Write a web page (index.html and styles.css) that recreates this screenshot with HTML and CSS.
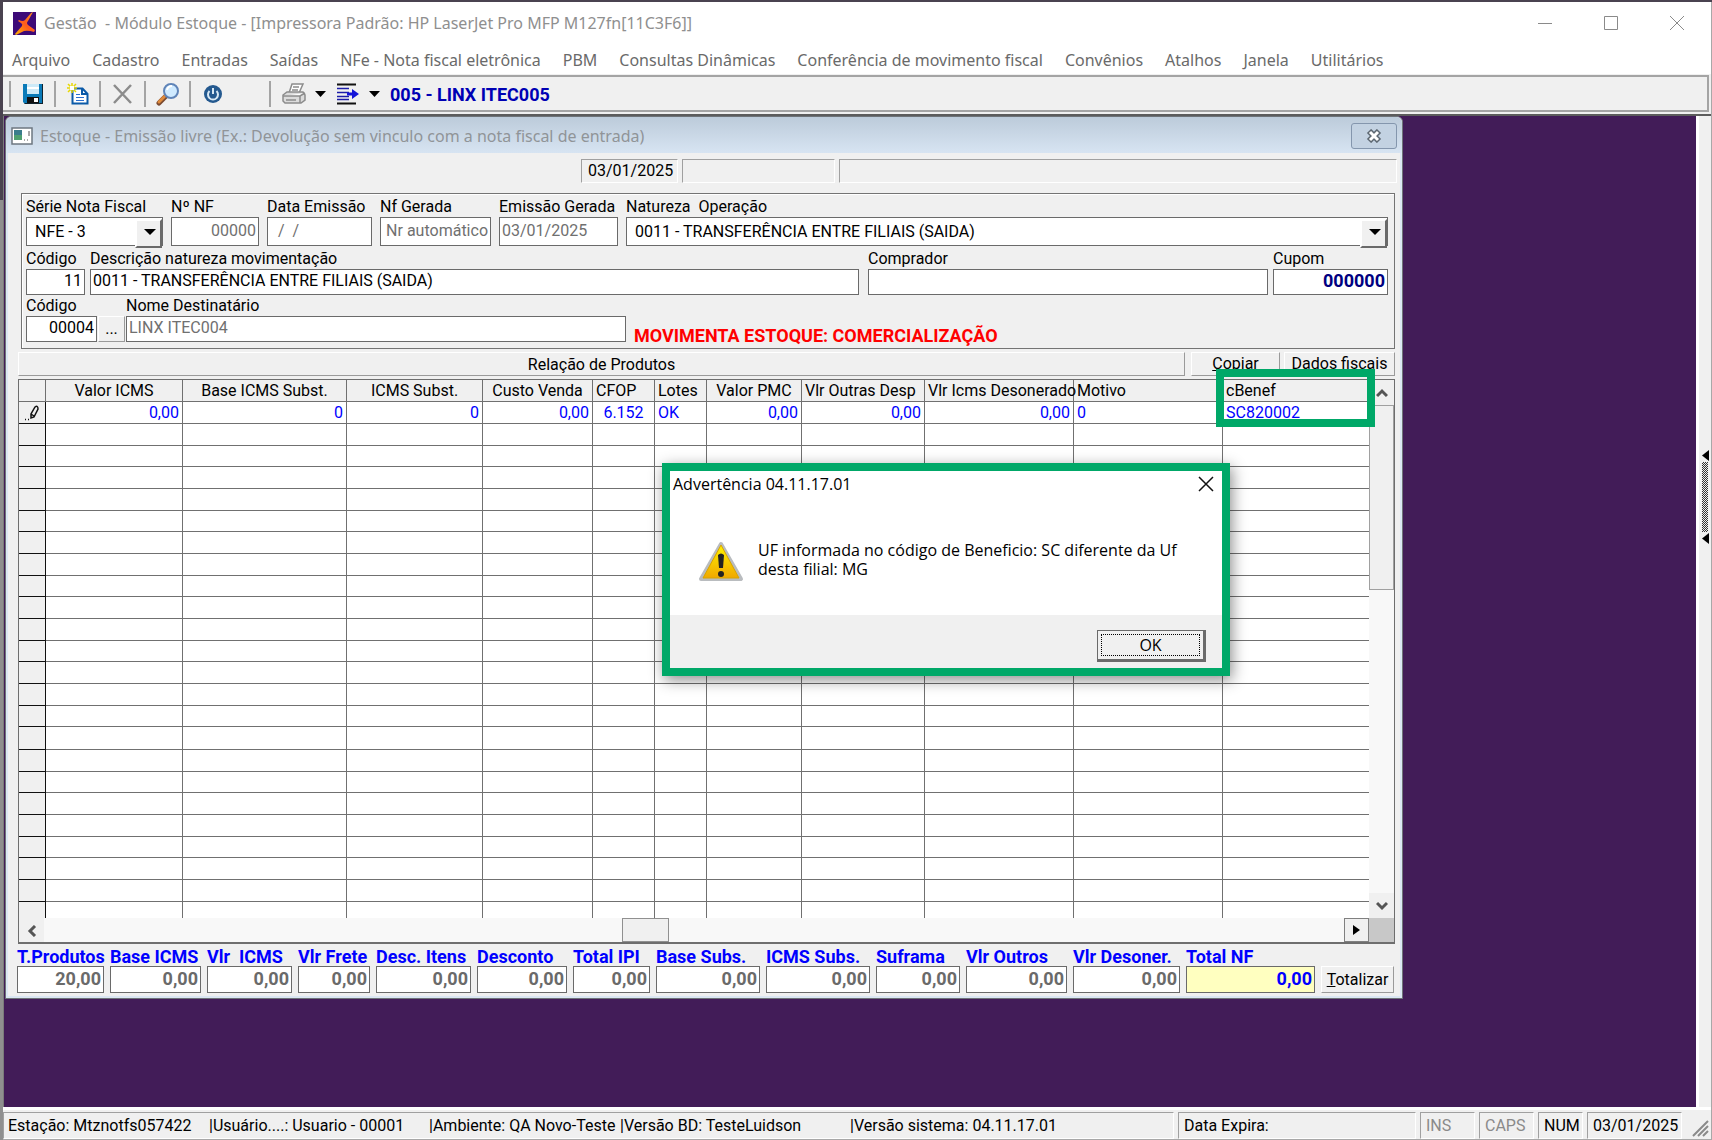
FILE: index.html
```html
<!DOCTYPE html>
<html lang="pt-BR">
    <head>
        <title>Gestão - Módulo Estoque</title>
        <meta charset="utf-8">
        <link rel="stylesheet" href="styles.css">
    </head>
    <body>
        <div class="app">
            <header class="titlebar">
                <svg class="logo" viewBox="0 0 23 23" width="23" height="23">
                    <defs>
                        <linearGradient id="flame" x1="0" y1="1" x2="1" y2="0">
                            <stop offset="0" stop-color="#ffb400"/>
                            <stop offset="0.5" stop-color="#ff5a1e"/>
                            <stop offset="1" stop-color="#ff9a1a"/>
                        </linearGradient>
                    </defs>
                    <rect width="23" height="23" fill="#3d0a78"/>
                    <path d="M18 1L20 0L15 9Q13 11 15 13L22 18L21 20Q15 18 11 19L3 23L2 22L9 14Q10 12 8 11L5 9L6 8Q10 10 12 8Z" fill="url(#flame)"/>
                </svg>
                <span class="titlebar-text">Gestão&nbsp; - Módulo Estoque - [Impressora Padrão: HP LaserJet Pro MFP M127fn[11C3F6]]</span>
                <button class="win-btn" aria-label="Minimizar"><svg width="16" height="16"><path d="M1 8.500H15" stroke="#8a8a8a" fill="none"/></svg></button>
                <button class="win-btn" aria-label="Maximizar"><svg width="16" height="16"><path d="M1.500 1.500H14.500V14.500H1.500Z" stroke="#8a8a8a" fill="none"/></svg></button>
                <button class="win-btn" aria-label="Fechar"><svg width="16" height="16"><path d="M1 1L15 15M15 1L1 15" stroke="#8a8a8a" fill="none"/></svg></button>
            </header>

            <nav class="menu">
                <a href="#">Arquivo</a>
                <a href="#">Cadastro</a>
                <a href="#">Entradas</a>
                <a href="#">Saídas</a>
                <a href="#">NFe - Nota fiscal eletrônica</a>
                <a href="#">PBM</a>
                <a href="#">Consultas Dinâmicas</a>
                <a href="#">Conferência de movimento fiscal</a>
                <a href="#">Convênios</a>
                <a href="#">Atalhos</a>
                <a href="#">Janela</a>
                <a href="#">Utilitários</a>
            </nav>

            <div class="toolbar">
                <span class="sep"></span>
                <button class="tool" aria-label="Salvar">
                    <svg width="22" height="22" viewBox="0 0 22 22">
                        <path d="M1 1H21V21H3L1 19Z" fill="#0a7ab8"/>
                        <path d="M20 1H21V21H3L2 20H20Z" fill="#12242e"/>
                        <rect x="5" y="1" width="12" height="10" fill="#cdeaf8"/>
                        <rect x="5" y="4" width="12" height="2" fill="#ffffff"/>
                        <rect x="5" y="14" width="12" height="6" fill="#111111"/>
                        <rect x="12" y="15" width="4" height="4" fill="#ffffff"/>
                    </svg>
                </button>
                <span class="sep"></span>
                <button class="tool" aria-label="Novo">
                    <svg width="22" height="22" viewBox="0 0 22 22">
                        <path d="M5.500 5.500H15.500L20.500 11V20.500H5.500Z" fill="#fff" stroke="#0b5aa8" stroke-width="2"/>
                        <path d="M15 5V11H20" fill="none" stroke="#0b5aa8" stroke-width="2"/>
                        <path d="M9 11.500H13M9 14.500H17M9 17.500H17" stroke="#2b6fd0" stroke-width="1"/>
                        <path d="M5 0V10M0 5H10M1 1L9 9M9 1L1 9" stroke="#e8d800" stroke-width="1.500"/>
                        <rect x="3" y="3" width="4" height="4" fill="#ffffff"/>
                    </svg>
                </button>
                <span class="sep"></span>
                <button class="tool" aria-label="Excluir">
                    <svg width="22" height="22" viewBox="0 0 22 22"><path d="M2 2L19 20M19 2L2 20" stroke="#8c8c8c" stroke-width="2.500" fill="none"/></svg>
                </button>
                <span class="sep"></span>
                <button class="tool" aria-label="Pesquisar">
                    <svg width="24" height="24" viewBox="0 0 24 24">
                        <path d="M11 13L3 21" stroke="#7a4a30" stroke-width="5" stroke-linecap="round"/>
                        <path d="M10 13L3 20" stroke="#e08a3c" stroke-width="3" stroke-linecap="round"/>
                        <circle cx="15" cy="9" r="7" fill="#cfeaff" stroke="#5f84b8" stroke-width="2"/>
                        <path d="M11 8Q12 4 16 4" stroke="#fff" stroke-width="2" fill="none"/>
                    </svg>
                </button>
                <span class="sep"></span>
                <button class="tool" aria-label="Sair">
                    <svg width="22" height="22" viewBox="0 0 22 22">
                        <circle cx="11" cy="11" r="9" fill="#24598f"/>
                        <path d="M7.500 8A5 5 0 1 0 14.500 8" fill="none" stroke="#d8e8f4" stroke-width="2"/>
                        <path d="M11 5V11" stroke="#d8e8f4" stroke-width="2"/>
                    </svg>
                </button>
                <span class="sep sep-wide"></span>
                <button class="tool tool-drop" aria-label="Imprimir">
                    <svg width="25" height="22" viewBox="0 0 25 22" fill="#fff" stroke="#8c8c8c" stroke-width="1.500">
                        <path d="M8 10L11 1H22L18 10"/>
                        <path d="M12 4H18M11 7H17"/>
                        <path d="M2 12L6 9H22L24 12V17L20 20H4L2 18Z" fill="#dcdcdc"/>
                        <path d="M2 13H19L24 10M19 13V20M5 17H15"/>
                    </svg>
                    <svg width="11" height="6"><path d="M0 0H11L5.500 6Z"/></svg>
                </button>
                <button class="tool tool-drop" aria-label="Filial">
                    <svg width="24" height="22" viewBox="0 0 24 22">
                        <path d="M1 1.500H20M1 20.500H20" stroke="#111" stroke-width="2"/>
                        <path d="M1 5.500H13M1 9.500H13M1 13.500H13M1 16.500H13" stroke="#1c1ca8" stroke-width="1.500"/>
                        <path d="M11 9.500H16V6L23 11L16 16V12.500H11Z" fill="#1515d8"/>
                    </svg>
                    <svg width="11" height="6"><path d="M0 0H11L5.500 6Z"/></svg>
                </button>
                <strong class="branch">005 - LINX ITEC005</strong>
            </div>

            <div class="workspace">
                <main class="mdi">
                    <section class="window">
                        <div class="window-title">
                            <svg width="22" height="18" viewBox="0 0 22 18">
                                <rect x="1" y="1" width="20" height="16" fill="#fff" stroke="#6d7780" stroke-width="1.500"/>
                                <rect x="3" y="3" width="8" height="10" fill="#3a7d8c"/>
                                <rect x="3" y="8" width="8" height="5" fill="#4fa070"/>
                                <path d="M13 13H14M16 13H17M18 4V9" stroke="#555"/>
                            </svg>
                            <span>Estoque - Emissão livre (Ex.: Devolução sem vinculo com a nota fiscal de entrada)</span>
                            <button class="window-close" aria-label="Fechar janela">
                                <svg width="18" height="14" viewBox="0 0 18 14">
                                    <path d="M4 2L14 12M14 2L4 12" stroke="#5d6872" stroke-width="6"/>
                                    <path d="M5 3L13 11M13 3L5 11" stroke="#fff" stroke-width="3"/>
                                </svg>
                            </button>
                        </div>

                        <div class="panels">
                            <span class="panel panel-date">03/01/2025</span>
                            <span class="panel panel-user"></span>
                            <span class="panel panel-info"></span>
                        </div>

                        <form class="note">
                            <div class="line">
                                <div class="field w-serie">
                                    <label for="serie">Série Nota Fiscal</label>
                                    <div class="drop"><select id="serie"><option>NFE - 3</option></select></div>
                                </div>
                                <div class="field w-nf">
                                    <label for="nf">Nº NF</label>
                                    <input id="nf" class="right off" value="00000">
                                </div>
                                <div class="field w-data">
                                    <label for="data">Data Emissão</label>
                                    <input id="data" class="off" value="  /  /">
                                </div>
                                <div class="field w-gerada">
                                    <label for="gerada">Nf Gerada</label>
                                    <input id="gerada" class="right off" value="Nr automático">
                                </div>
                                <div class="field w-emissao">
                                    <label for="emissao">Emissão Gerada</label>
                                    <input id="emissao" class="off" value="03/01/2025">
                                </div>
                                <div class="field grow">
                                    <label for="natureza">Natureza&nbsp; Operação</label>
                                    <div class="drop"><select id="natureza"><option>0011 - TRANSFERÊNCIA ENTRE FILIAIS (SAIDA)</option></select></div>
                                </div>
                            </div>
                            <div class="line line-mov">
                                <div class="field w-cod">
                                    <label for="cod">Código</label>
                                    <input id="cod" class="right" value="11">
                                </div>
                                <div class="field w-desc">
                                    <label for="desc">Descrição natureza movimentação</label>
                                    <input id="desc" value="0011 - TRANSFERÊNCIA ENTRE FILIAIS (SAIDA)">
                                </div>
                                <div class="field grow">
                                    <label for="comprador">Comprador</label>
                                    <input id="comprador" value="">
                                </div>
                                <div class="field w-cupom">
                                    <label for="cupom">Cupom</label>
                                    <input id="cupom" class="right cupom" value="000000">
                                </div>
                            </div>
                            <div class="line line-dest">
                                <div class="field w-dest">
                                    <label for="dest">Código</label>
                                    <input id="dest" class="right" value="00004">
                                </div>
                                <button type="button" class="raised lookup" aria-label="Buscar destinatário">...</button>
                                <div class="field w-nome">
                                    <label for="nome">Nome Destinatário</label>
                                    <input id="nome" class="off" value="LINX ITEC004">
                                </div>
                                <strong class="notice">MOVIMENTA ESTOQUE: COMERCIALIZAÇÃO</strong>
                            </div>
                        </form>

                        <div class="products-bar">
                            <h2 class="raised">Relação de Produtos</h2>
                            <button class="raised w-copiar"><u>C</u>opiar</button>
                            <button class="raised w-dados">Dados fiscais</button>
                        </div>

                        <div class="grid">
                            <div class="grid-top">
                                <table>
                                    <colgroup>
                                        <col class="c-mark"><col class="c-icms"><col class="c-base"><col class="c-subst">
                                        <col class="c-custo"><col class="c-cfop"><col class="c-lotes"><col class="c-pmc">
                                        <col class="c-outras"><col class="c-deson"><col class="c-deson"><col>
                                    </colgroup>
                                    <thead>
                                        <tr>
                                            <th></th>
                                            <th>Valor ICMS</th>
                                            <th>Base ICMS Subst.</th>
                                            <th>ICMS Subst.</th>
                                            <th>Custo Venda</th>
                                            <th class="left">CFOP</th>
                                            <th class="left">Lotes</th>
                                            <th>Valor PMC</th>
                                            <th class="left">Vlr Outras Desp</th>
                                            <th class="left">Vlr Icms Desonerado</th>
                                            <th class="left">Motivo</th>
                                            <th class="left">cBenef</th>
                                        </tr>
                                    </thead>
                                    <tbody id="rows">
                                        <tr>
                                            <th><svg width="16" height="16" viewBox="0 0 16 16"><path d="M7 13V9L11 2Q14 0 14 4L10 12ZM7 9L10 11M1 14.500H2M4 14.500H5" fill="none" stroke="#111" stroke-width="1.500"/></svg></th>
                                            <td>0,00</td>
                                            <td>0</td>
                                            <td>0</td>
                                            <td>0,00</td>
                                            <td class="center">6.152</td>
                                            <td class="left">OK</td>
                                            <td>0,00</td>
                                            <td>0,00</td>
                                            <td>0,00</td>
                                            <td class="left">0</td>
                                            <td class="left">SC820002</td>
                                        </tr>
                                    </tbody>
                                </table>
                                <div class="vscroll">
                                    <button aria-label="Subir"><svg width="12" height="10"><path d="M1 8L6 3L11 8" fill="none" stroke="#555" stroke-width="3"/></svg></button>
                                    <div class="vtrack"><div class="vthumb"></div></div>
                                    <button aria-label="Descer"><svg width="12" height="10"><path d="M1 2L6 7L11 2" fill="none" stroke="#555" stroke-width="3"/></svg></button>
                                </div>
                            </div>
                            <div class="hscroll">
                                <button aria-label="Esquerda"><svg width="10" height="12"><path d="M8 1L3 6L8 11" fill="none" stroke="#555" stroke-width="3"/></svg></button>
                                <div class="htrack"><div class="hthumb"></div></div>
                                <button class="hnext" aria-label="Direita"><svg width="7" height="12"><path d="M0 1L7 6L0 11Z"/></svg></button>
                                <div class="corner"></div>
                            </div>
                            <div class="highlight"></div>
                        </div>

                        <form class="totals">
                            <div class="total"><label for="t1">T.Produtos</label><input id="t1" value="20,00"></div>
                            <div class="total"><label for="t2">Base ICMS</label><input id="t2" value="0,00"></div>
                            <div class="total"><label for="t3">Vlr&nbsp; ICMS</label><input id="t3" value="0,00"></div>
                            <div class="total"><label for="t4">Vlr Frete</label><input id="t4" value="0,00"></div>
                            <div class="total"><label for="t5">Desc. Itens</label><input id="t5" value="0,00"></div>
                            <div class="total"><label for="t6">Desconto</label><input id="t6" value="0,00"></div>
                            <div class="total"><label for="t7">Total IPI</label><input id="t7" value="0,00"></div>
                            <div class="total"><label for="t8">Base Subs.</label><input id="t8" value="0,00"></div>
                            <div class="total"><label for="t9">ICMS Subs.</label><input id="t9" value="0,00"></div>
                            <div class="total"><label for="t10">Suframa</label><input id="t10" value="0,00"></div>
                            <div class="total"><label for="t11">Vlr Outros</label><input id="t11" value="0,00"></div>
                            <div class="total"><label for="t12">Vlr Desoner.</label><input id="t12" value="0,00"></div>
                            <div class="total total-nf"><label for="t13">Total NF</label><input id="t13" value="0,00"></div>
                            <button type="button" class="raised totalizar"><u>T</u>otalizar</button>
                        </form>
                    </section>

                    <section class="alert" role="alertdialog" aria-labelledby="alert-title">
                        <div class="alert-head">
                            <span id="alert-title">Advertência 04.11.17.01</span>
                            <button class="win-btn" aria-label="Fechar aviso"><svg width="16" height="16"><path d="M1 1L15 15M15 1L1 15" stroke="#111" stroke-width="1.500" fill="none"/></svg></button>
                        </div>
                        <div class="alert-body">
                            <svg width="46" height="42" viewBox="0 0 46 42">
                                <defs>
                                    <linearGradient id="warn" x1="0" y1="0" x2="0" y2="1">
                                        <stop offset="0" stop-color="#fff200"/>
                                        <stop offset="1" stop-color="#f0a800"/>
                                    </linearGradient>
                                </defs>
                                <path d="M23 3L43 38H3Z" fill="#b9bcbf" stroke="#b9bcbf" stroke-width="4" stroke-linejoin="round"/>
                                <path d="M23 4L41 37H5Z" fill="url(#warn)" stroke="#d9a400"/>
                                <path d="M20 14Q23 11 26 14L25 27H21Z" fill="#222"/>
                                <circle cx="23" cy="33" r="3" fill="#222"/>
                            </svg>
                            <p>UF informada no código de Beneficio: SC diferente da Uf<br>desta filial: MG</p>
                        </div>
                        <div class="alert-foot">
                            <button class="ok"><span>OK</span></button>
                        </div>
                    </section>
                </main>
                <div class="splitter">
                    <svg width="7" height="11"><path d="M7 0V11L0 5.500Z"/></svg>
                    <div class="splitter-grip"></div>
                    <svg width="7" height="11"><path d="M7 0V11L0 5.500Z"/></svg>
                </div>
            </div>

            <footer class="status">
                <div class="cell status-main">
                    <span class="s-estacao">Estação: Mtznotfs057422</span>
                    <span class="s-usuario">|Usuário....: Usuario - 00001</span>
                    <span class="s-ambiente">|Ambiente: QA Novo-Teste</span>
                    <span class="s-banco">|Versão BD: TesteLuidson</span>
                    <span>|Versão sistema: 04.11.17.01</span>
                </div>
                <div class="cell s-expira">Data Expira:</div>
                <div class="cell s-ins dim">INS</div>
                <div class="cell s-ins dim">CAPS</div>
                <div class="cell s-num">NUM</div>
                <div class="cell s-date">03/01/2025</div>
                <svg class="size-grip" width="18" height="18"><path d="M2 17L17 2M7 17L17 7M12 17L17 12" stroke="#8a8a8a" stroke-width="2"/></svg>
            </footer>
        </div>
        <script type="text/javascript">

// Fill the products table with blank rows.
var rows = document.getElementById("rows");
for (var i = 0; i < 23; i++) {
    var tr = rows.insertRow();
    tr.appendChild(document.createElement("th"));
    for (var j = 0; j < 11; j++)
        tr.insertCell();
}
        </script>
    </body>
</html>
```
FILE: styles.css
```css
*
{
    box-sizing: border-box;
}
body
{
    margin: 0px;
    padding: 2px 0px 0px 3px;
    font: 16px/20px Roboto, "Liberation Sans", sans-serif;
    color: #000;
    background: linear-gradient(#4a4350 200px, #8f8f8f 200px);
}
button, input, select
{
    font: inherit;
    color: inherit;
    margin: 0px;
    padding: 0px;
    border: 0px;
    border-radius: 0px;
    background: none;
}
svg
{
    display: block;
    flex: none;
}
.app
{
    display: flex;
    flex-direction: column;
    min-height: calc(100vh - 2px);
    background-color: #f0f0f0;
    border-right: 1px solid #a8a8a8;
    border-bottom: 1px solid #a8a8a8;
}

/* title bar and menu */
.titlebar
{
    display: flex;
    align-items: center;
    height: 42px;
    padding: 0px 1px 0px 10px;
    background-color: #fff;
    font: 16px/20px "Noto Sans", "Open Sans", sans-serif;
    color: #8f8f8f;
}
.titlebar-text
{
    flex: 1;
    padding-left: 8px;
}
.win-btn
{
    display: flex;
    justify-content: center;
    width: 66px;
}
.menu
{
    display: flex;
    gap: 22px;
    height: 30px;
    padding: 5px 9px;
    background-color: #fff;
    font: 16px/22px "Noto Sans", "Open Sans", sans-serif;
}
.menu a
{
    color: #6a6a6a;
    text-decoration: none;
    white-space: nowrap;
}

/* toolbar */
.toolbar
{
    display: flex;
    align-items: center;
    height: 37px;
    margin: 1px 2px 0px 0px;
    padding-left: 6px;
    border: 2px solid #a4a4a4;
    border-left: 0px;
}
.sep
{
    width: 2px;
    height: 26px;
    margin: 0px 10px 0px 0px;
    background-color: #a4a4a4;
}
.sep-wide
{
    margin: 0px 9px 0px 35px;
}
.tool
{
    display: flex;
    align-items: center;
    justify-content: center;
    gap: 9px;
    width: 24px;
    margin-right: 9px;
}
.tool-drop
{
    width: 46px;
}
.branch
{
    padding-top: 2px;
    font-size: 18px;
    color: #0000b4;
}

/* workspace */
.workspace
{
    display: flex;
    flex: 1;
    margin-top: 2px;
    border-top: 2px solid #5c5c5c;
}
.mdi
{
    position: relative;
    flex: 1;
    padding: 0px 0px 108px 1px;
    background-color: #421c58;
    border-left: 1px solid #7a7a7a;
    border-right: 3px solid #fff;
}
.splitter
{
    display: flex;
    flex-direction: column;
    align-items: center;
    gap: 1px;
    width: 12px;
    padding-top: 334px;
}
.splitter-grip
{
    width: 6px;
    height: 70px;
    background: repeating-conic-gradient(#333 0% 25%, #eee 0% 50%) 0px 0px / 2px 2px;
}

/* invoice window */
.window
{
    display: flex;
    flex-direction: column;
    width: 100%;
    max-width: 1398px;
    border: 1px solid #6e7378;
    border-radius: 6px 6px 0px 0px;
    background-color: #f0f0f0;
    box-shadow: inset 0px 0px 0px 2px #dbe7f3;
}
.window-title
{
    display: flex;
    align-items: center;
    gap: 7px;
    height: 36px;
    padding: 2px 5px 0px;
    border-radius: 6px 6px 0px 0px;
    background: linear-gradient(#bccbda, #d7e4f2);
    font: 16px/20px "Noto Sans", "Open Sans", sans-serif;
    color: #909498;
}
.window-title span
{
    flex: 1;
}
.window-close
{
    display: flex;
    align-items: center;
    justify-content: center;
    width: 46px;
    height: 26px;
    border: 1px solid #8496ad;
    border-radius: 3px;
    background-color: #c3d2e2;
}
.panels
{
    display: flex;
    gap: 4px;
    margin: 6px 5px 0px 575px;
}
.panel
{
    height: 24px;
    border: 1px solid #a0a0a0;
    border-right-color: #fff;
    border-bottom-color: #fff;
}
.panel-date
{
    width: 97px;
    padding: 1px 6px;
}
.panel-user
{
    width: 153px;
}
.panel-info
{
    flex: 1;
}

/* invoice header form */
.note
{
    display: flex;
    flex-direction: column;
    margin: 10px 7px 0px 15px;
    padding: 3px 6px 6px 4px;
    border: 1px solid #747474;
    box-shadow: inset 1px 1px 0px #fff;
}
.line
{
    display: flex;
    align-items: flex-end;
    gap: 8px;
}
.line-mov
{
    gap: 5px;
    margin-top: 3px;
}
.line-dest
{
    gap: 1px;
    margin-top: 1px;
}
.field
{
    display: flex;
    flex-direction: column;
}
.field label
{
    white-space: pre;
}
.field input
{
    width: 100%;
    height: 26px;
    padding: 0px 2px 3px;
    border: 1px solid #6a6a6a;
    background-color: #fff;
}
.line:first-child input
{
    height: 29px;
}
.field .right
{
    text-align: right;
}
.field .off
{
    color: #707070;
}
.field .cupom
{
    font-size: 18px;
    font-weight: bold;
    color: #000080;
}
.drop
{
    position: relative;
}
.drop select
{
    width: 100%;
    height: 29px;
    padding-left: 8px;
    border: 1px solid #6a6a6a;
    background-color: #fff;
    appearance: none;
}
.drop::before
{
    content: "";
    position: absolute;
    top: 2px;
    right: 1px;
    width: 23px;
    height: 25px;
    border: 2px solid #fff;
    border-right-color: #6a6a6a;
    border-bottom-color: #6a6a6a;
    background-color: #f0f0f0;
    pointer-events: none;
}
.drop::after
{
    content: "";
    position: absolute;
    top: 12px;
    right: 7px;
    border: 6px solid transparent;
    border-top-color: #000;
    border-bottom: 0px;
    pointer-events: none;
}
.grow
{
    flex: 1;
}
.w-serie { width: 137px; }
.w-nf { width: 88px; }
.w-data { width: 105px; }
.w-gerada { width: 111px; }
.w-emissao { width: 119px; }
.w-cod { width: 59px; }
.w-desc { width: 769px; margin-right: 4px; }
.w-cupom { width: 115px; }
.w-dest { width: 71px; }
.w-nome { width: 500px; }
.notice
{
    padding: 0px 0px 0px 7px;
    font-size: 18px;
    line-height: 13px;
    color: #ff0000;
}
.raised
{
    border: 1px solid #fff;
    border-right-color: #9a9a9a;
    border-bottom-color: #9a9a9a;
    background-color: #f0f0f0;
}
.lookup
{
    width: 27px;
    height: 26px;
}

/* products */
.products-bar
{
    display: flex;
    gap: 4px;
    height: 24px;
    margin: 3px 7px 0px 12px;
}
.products-bar h2
{
    flex: 1;
    margin: 0px 2px 0px 0px;
    font-size: 16px;
    font-weight: normal;
    line-height: 24px;
    text-align: center;
}
.w-copiar { width: 89px; }
.w-dados { width: 111px; }
.grid
{
    position: relative;
    margin: 3px 7px 0px 12px;
    border: 1px solid #6e6e6e;
    border-bottom-width: 2px;
}
.grid-top
{
    display: flex;
    height: 538px;
    overflow: hidden;
}
table
{
    flex: 1;
    table-layout: fixed;
    width: 100px;
    height: 543px;
    border-spacing: 0px;
    background-color: #fff;
}
.c-mark { width: 27px; }
.c-icms { width: 137px; }
.c-base { width: 164px; }
.c-subst { width: 136px; }
.c-custo { width: 110px; }
.c-cfop { width: 62px; }
.c-lotes { width: 52px; }
.c-pmc { width: 95px; }
.c-outras { width: 123px; }
.c-deson { width: 149px; }
th, td
{
    height: 22px;
    padding: 0px 3px;
    border-right: 1px solid #707070;
    border-bottom: 1px solid #707070;
    font-weight: normal;
    line-height: 20px;
    white-space: nowrap;
}
tr:nth-child(3n) > *
{
    height: 21px;
}
th
{
    background-color: #f0f0f0;
}
tbody th
{
    padding: 0px 0px 0px 5px;
    border-color: #111;
}
td
{
    text-align: right;
    color: #0000ff;
}
th.left, td.left
{
    text-align: left;
}
td.center
{
    text-align: center;
}
th:last-child, td:last-child
{
    border-right: 0px;
}
.vscroll
{
    display: flex;
    flex-direction: column;
    width: 25px;
}
.vscroll button, .hscroll button
{
    display: flex;
    align-items: center;
    justify-content: center;
    width: 25px;
    height: 25px;
}
.vtrack
{
    flex: 1;
    background-color: #f8f8f8;
}
.vthumb
{
    height: 38%;
    border: 1px solid #a0a0a0;
    background-color: #f0f0f0;
}
.hscroll
{
    display: flex;
    height: 24px;
}
.htrack
{
    flex: 1;
    padding-left: 578px;
    background-color: #f8f8f8;
}
.hthumb
{
    width: 47px;
    height: 24px;
    border: 1px solid #909090;
    background-color: #f0f0f0;
}
.hscroll .hnext
{
    height: 24px;
    border: 1px solid #808080;
}
.corner
{
    width: 25px;
    background-color: #c8c8c8;
}
/* frame drawn over the cBenef column */
.highlight
{
    position: absolute;
    top: -11px;
    right: 19px;
    width: 159px;
    height: 58px;
    border: 8px solid #00a868;
}

/* totals */
.totals
{
    display: grid;
    grid-template-columns: 87px 91px 85px 72px 95px 90px 77px 104px 104px 84px 101px 107px 1fr 73px;
    align-items: end;
    column-gap: 6px;
    margin: 4px 8px 5px 11px;
}
.total
{
    display: flex;
    flex-direction: column;
    font-size: 18px;
    font-weight: bold;
}
.total label
{
    line-height: 18px;
    white-space: nowrap;
    color: #0000ff;
}
.total input
{
    width: 100%;
    height: 27px;
    padding: 0px 2px 3px;
    border: 1px solid #6a6a6a;
    background-color: #fff;
    color: #6a6a6a;
    text-align: right;
}
.total-nf input
{
    background-color: #ffffc0;
    color: #0000ff;
}
.totalizar
{
    height: 27px;
}

/* warning dialog */
.alert
{
    position: absolute;
    top: 347px;
    left: 658px;
    width: 568px;
    border: 8px solid #00a868;
    background-color: #fff;
    box-shadow: 2px 4px 14px rgba(0, 0, 0, 0.45);
    font: 16px/19px "Open Sans", "Noto Sans", sans-serif;
}
.alert-head
{
    display: flex;
    align-items: center;
    justify-content: space-between;
    height: 26px;
    padding-left: 3px;
}
.alert-head .win-btn
{
    width: 32px;
}
.alert-body
{
    display: flex;
    gap: 14px;
    padding: 44px 20px 31px 28px;
    min-height: 118px;
}
.alert-body p
{
    margin: 0px;
}
.alert-foot
{
    display: flex;
    justify-content: flex-end;
    padding: 15px 16px 6px;
    background-color: #f0f0f0;
}
.ok
{
    width: 109px;
    height: 32px;
    padding: 3px;
    border: 1px solid #6a6a6a;
    border-right-width: 3px;
    border-bottom-width: 3px;
    background-color: #f0f0f0;
}
.ok span
{
    display: block;
    border: 1px dotted #000;
    line-height: 20px;
}

/* status bar */
.status
{
    display: flex;
    gap: 4px;
    height: 32px;
    padding-top: 2px;
    border-top: 3px solid #fff;
}
.cell
{
    padding: 3px 5px;
    border: 1px solid #a0a0a0;
    border-right-color: #fff;
    border-bottom-color: #fff;
    white-space: nowrap;
}
.status-main
{
    display: flex;
    flex: 1;
    padding-left: 4px;
}
.s-estacao { width: 201px; }
.s-usuario { width: 220px; }
.s-ambiente { width: 191px; }
.s-banco { width: 230px; }
.s-expira { width: 238px; }
.s-ins { width: 55px; }
.s-num { width: 45px; }
.s-date { width: 95px; }
.dim
{
    color: #8a8a8a;
}
.size-grip
{
    margin: 7px 2px 0px 5px;
}
```
